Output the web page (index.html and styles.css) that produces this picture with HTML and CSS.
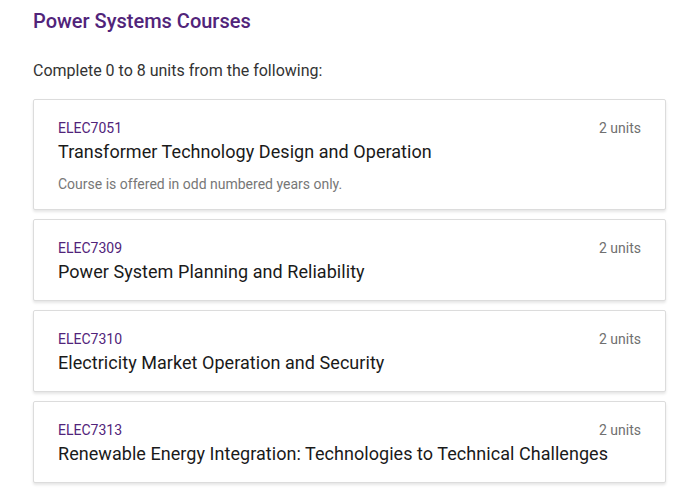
FILE: index.html
```html
<!DOCTYPE html>
<html lang="en">
<head>
    <meta charset="UTF-8">
    <meta name="viewport" content="width=device-width, initial-scale=1.0">
    <title>Power Systems Courses</title>
    <link rel="stylesheet" href="styles.css">
</head>
<body>
    <div class="container">
        <h2>Power Systems Courses</h2>
        <p class="rule">Complete 0 to 8 units from the following:</p>

        <div class="course">
            <div class="course-top">
                <span class="code">ELEC7051</span>
                <span class="units">2 units</span>
            </div>
            <div class="name">Transformer Technology Design and Operation</div>
            <div class="note">Course is offered in odd numbered years only.</div>
        </div>

        <div class="course">
            <div class="course-top">
                <span class="code">ELEC7309</span>
                <span class="units">2 units</span>
            </div>
            <div class="name">Power System Planning and Reliability</div>
        </div>

        <div class="course">
            <div class="course-top">
                <span class="code">ELEC7310</span>
                <span class="units">2 units</span>
            </div>
            <div class="name">Electricity Market Operation and Security</div>
        </div>

        <div class="course">
            <div class="course-top">
                <span class="code">ELEC7313</span>
                <span class="units">2 units</span>
            </div>
            <div class="name">Renewable Energy Integration: Technologies to Technical Challenges</div>
        </div>
    </div>
</body>
</html>
```

FILE: styles.css
```css
body {
    font-family: Roboto, "Liberation Sans", sans-serif;
    background-color: #fff;
    margin: 0;
    color: #333;
}
.container {
    padding: 8px 34px 20px 33px;
}
h2 {
    margin: 0;
    font-size: 20px;
    line-height: 26px;
    font-weight: 500;
    color: #51247a;
}
.rule {
    margin: 25px 0 16px;
    font-size: 16px;
    line-height: 24px;
    color: #333;
}
.course {
    background-color: #fff;
    border: 1px solid #dcdcdc;
    border-radius: 2px;
    box-shadow: 0 2px 3px rgba(0, 0, 0, 0.1);
    padding: 18px 24px 15px 24px;
    margin-bottom: 9px;
}
.course-top {
    display: flex;
    justify-content: space-between;
    line-height: 21px;
}
.code {
    font-size: 14px;
    color: #51247a;
}
.units {
    font-size: 14px;
    color: #707070;
}
.name {
    font-size: 18px;
    line-height: 26px;
    color: #1a1a1a;
    letter-spacing: 0.05px;
}
.note {
    margin-top: 10px;
    font-size: 14px;
    line-height: 19px;
    color: #777;
}
```
